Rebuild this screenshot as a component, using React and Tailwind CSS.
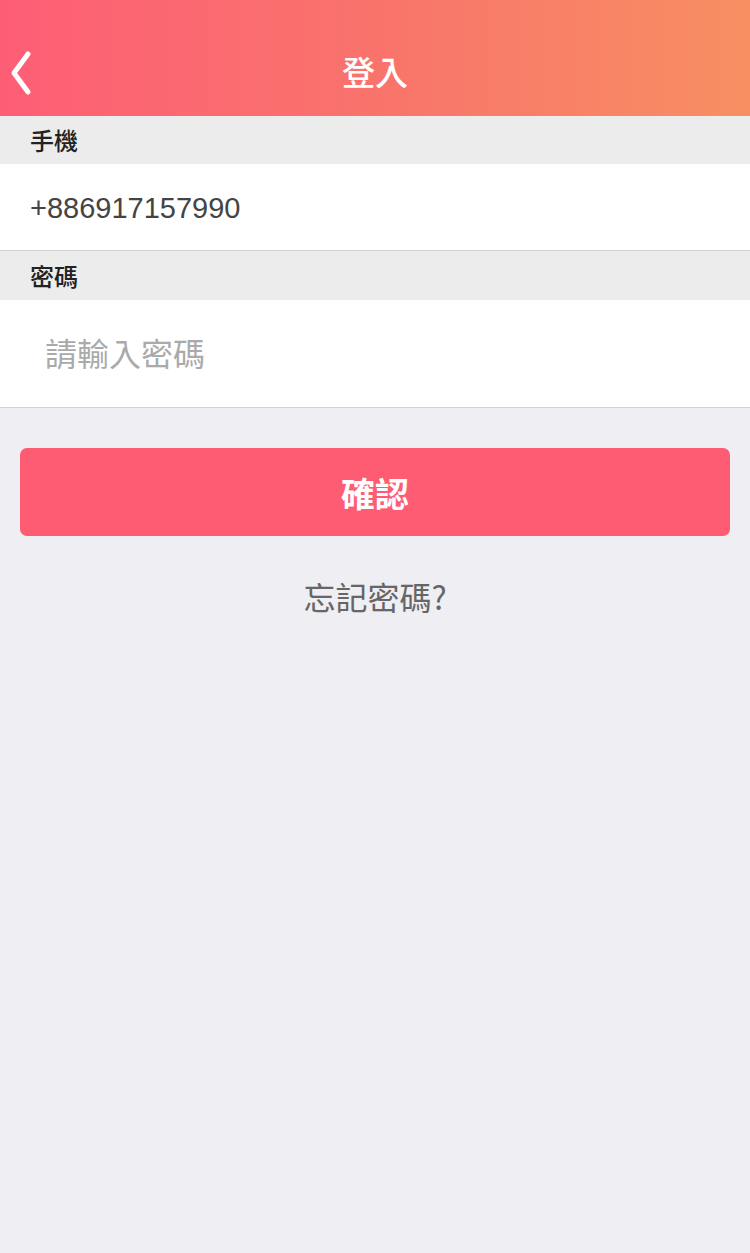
export default function App() {
  const font = { fontFamily: '"Noto Sans CJK TC", "Noto Sans", sans-serif' };
  return (
    <div className="w-[750px] min-h-[1253px] bg-[#efeef3] flex flex-col" style={font}>
      <header className="h-[116px] bg-gradient-to-r from-[#fd5e76] via-[#f9736b] to-[#f78f62] flex items-center relative shrink-0">
        <button className="absolute left-[8px] top-[50px] w-[26px] h-[46px] flex items-center justify-center">
          <svg width="26" height="46" viewBox="0 0 26 46" fill="none">
            <path d="M20 4 L6 23 L20 42" stroke="white" strokeWidth="5" strokeLinecap="round" strokeLinejoin="round" />
          </svg>
        </button>
        <h1 className="flex-1 text-center text-white text-[33px] font-medium pt-[26px] leading-none">登入</h1>
      </header>

      <div className="h-[48px] bg-[#ececec] flex items-center px-[30px] text-[24px] font-medium text-[#222]">手機</div>
      <div
        className="h-[87px] bg-white border-b border-[#d2d2d2] flex items-center px-[30px] pt-[3px] text-[29px] text-[#444]"
        style={{ fontFamily: '"Liberation Sans", Arial, sans-serif' }}
      >
        +886917157990
      </div>

      <div className="h-[49px] bg-[#ececec] flex items-center px-[30px] text-[24px] font-medium text-[#222]">密碼</div>
      <div className="h-[108px] bg-white border-b border-[#d2d2d2] flex items-center px-[45px]">
        <input
          type="password"
          placeholder="請輸入密碼"
          className="w-full outline-none text-[32px] text-[#444] placeholder:text-[#aaaaaa] bg-transparent -mt-[4px]"
          style={font}
        />
      </div>

      <div className="px-[20px] pt-[40px]">
        <button className="w-full h-[88px] rounded-[7px] bg-[#fd5c72] text-white text-[34px] font-bold" style={font}>
          確認
        </button>
      </div>

      <div className="text-center mt-[36px] text-[32px] text-[#666]">忘記密碼?</div>
    </div>
  );
}
